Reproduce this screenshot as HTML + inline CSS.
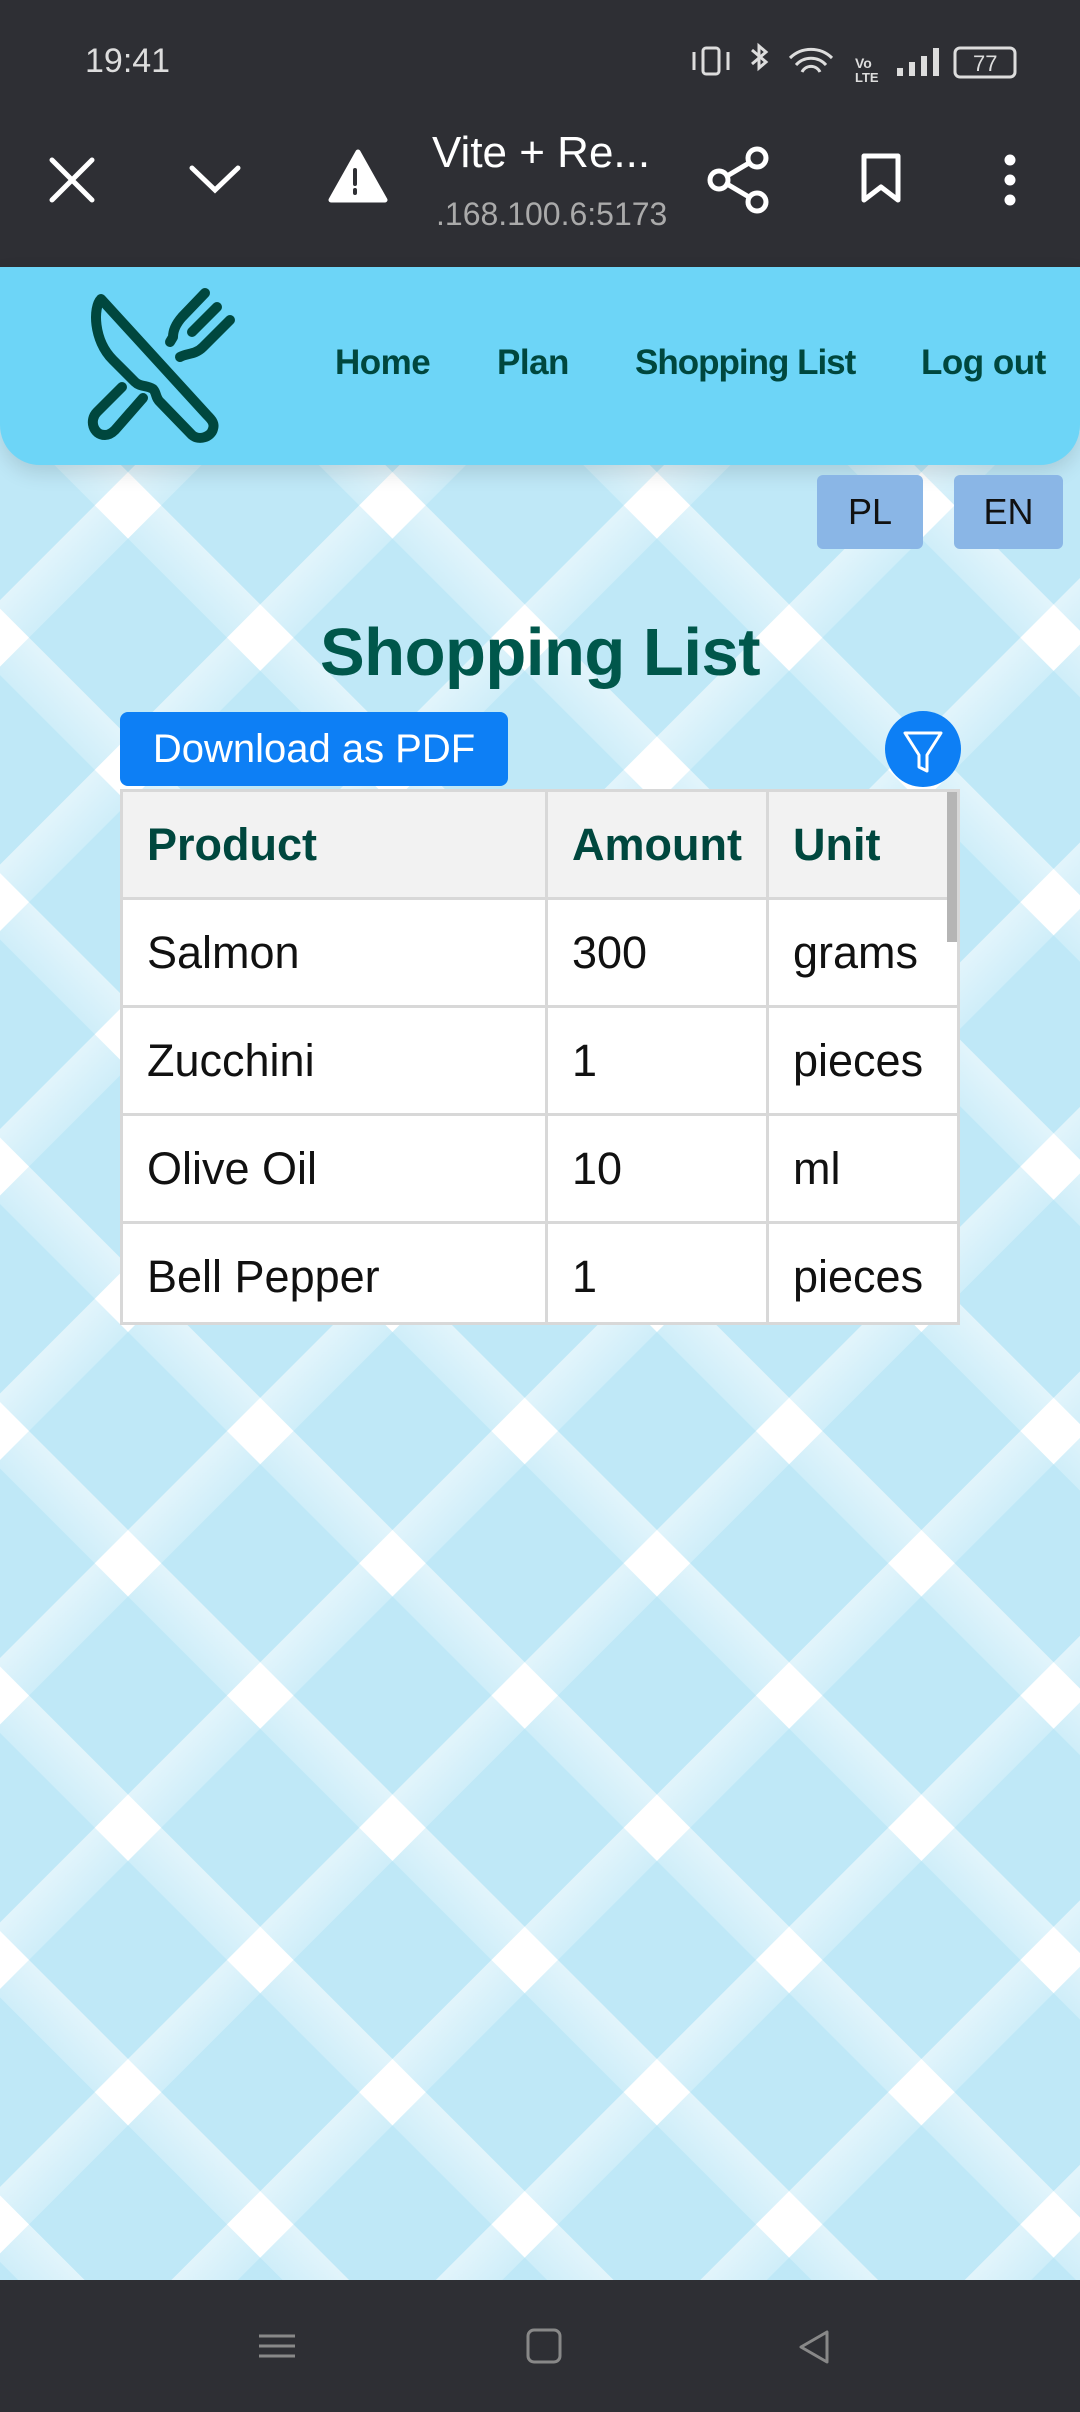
<!DOCTYPE html>
<html><head><meta charset="utf-8"><style>
*{margin:0;padding:0;box-sizing:border-box}
body{width:1080px;height:2412px;overflow:hidden;font-family:"Liberation Sans",sans-serif;position:relative;background:#c4e9f7}
.abs{position:absolute}
.top{left:0;top:0;width:1080px;height:280px;background:#2e2f34}
.bot{left:0;top:2280px;width:1080px;height:132px;background:#2e2f34}
.hdr{left:0;top:267px;width:1080px;height:198px;background:#6dd5f7;border-radius:0 0 40px 40px;box-shadow:0 8px 20px rgba(0,0,0,.12)}
.nav{top:343px;font-size:35px;font-weight:bold;color:#00473e;letter-spacing:-0.5px}
.lang{top:475px;height:74px;background:#8ab6e6;border-radius:6px;color:#111;font-size:36px;text-align:center;line-height:74px}
table{border-collapse:collapse;font-size:45px}
td,th{border:3px solid #d8d8d8;height:108px;padding:0 24px;text-align:left}
th{background:#f2f2f2;color:#00473e}
td{background:#fff;color:#111}
</style></head><body>
<svg class="abs" style="left:0;top:0" width="1080" height="2412">
<defs>
<linearGradient id="g1" x1="0" x2="1" y1="0" y2="0"><stop offset="0" stop-color="#fff" stop-opacity=".55"/><stop offset="1" stop-color="#fff" stop-opacity=".25"/></linearGradient>
<linearGradient id="g2" x1="0" x2="0" y1="0" y2="1"><stop offset="0" stop-color="#fff" stop-opacity=".55"/><stop offset="1" stop-color="#fff" stop-opacity=".25"/></linearGradient>
<pattern id="p" width="187" height="187" patternUnits="userSpaceOnUse" patternTransform="translate(128,1530) rotate(45)">
<rect width="187" height="187" fill="#bfe8f7"/>
<rect x="0" y="0" width="47" height="187" fill="url(#g1)"/>
<rect x="0" y="0" width="187" height="47" fill="url(#g2)"/>
<rect x="0" y="0" width="47" height="47" fill="#fff"/>
</pattern></defs>
<rect width="1080" height="2412" fill="url(#p)"/>
</svg>
<div class="abs top"></div>
<div class="abs" style="left:85px;top:42px;color:#ddd;font-size:34px">19:41</div>
<svg class="abs" style="left:690px;top:40px" width="330" height="45" fill="none" stroke="#ddd" stroke-width="3">
<rect x="13" y="8" width="16" height="26" rx="3"/><path d="M4 12v18M38 12v18"/>
<path d="M62 10l14 12-7 6V6l7 6-14 12"/>
<path d="M100 18a30 30 0 0 1 42 0M106 25a20 20 0 0 1 30 0M112 32a10 10 0 0 1 18 0"/>
<text x="165" y="28" fill="#ddd" stroke="none" font-size="14" font-weight="bold">Vo</text><text x="165" y="42" fill="#ddd" stroke="none" font-size="13" font-weight="bold">LTE</text>
<path d="M210 36v-8M222 36v-14M234 36v-20M246 36v-28" stroke-width="6"/>
<rect x="265" y="8" width="60" height="29" rx="5"/>
<text x="283" y="31" fill="#ddd" stroke="none" font-size="22">77</text>
</svg>
<svg class="abs" style="left:0;top:140px" width="1080" height="80" fill="none" stroke="#fff" stroke-width="5" stroke-linecap="round">
<path d="M52 20l40 40M92 20L52 60"/>
<path d="M192 28l23 22 23-22"/>
<path d="M358 12l27 48h-54z" fill="#fff" stroke-linejoin="round"/>
<path d="M355 30v14M355 50v3" stroke="#2e2f34" stroke-width="4"/>
<circle cx="719" cy="40" r="9"/><circle cx="757" cy="18" r="9"/><circle cx="757" cy="62" r="9"/><path d="M727 36l22-13M727 44l22 13"/>
<path d="M864 16h34v44l-17-13-17 13z" stroke-linejoin="round"/>
<circle cx="1010" cy="20" r="3" fill="#fff"/><circle cx="1010" cy="40" r="3" fill="#fff"/><circle cx="1010" cy="60" r="3" fill="#fff"/>
</svg>
<div class="abs" style="left:432px;top:128px;color:#fff;font-size:44px">Vite + Re...</div>
<div class="abs" style="left:436px;top:196px;color:#aaa;font-size:32px">.168.100.6:5173</div>
<div class="abs hdr"></div>
<svg class="abs" style="left:85px;top:285px" width="160" height="160" fill="none" stroke="#00473e" stroke-width="10" stroke-linecap="round" stroke-linejoin="round">
<path d="M16 14C8 22 8 55 28 75L50 97C55 102 62 100 68 104C72 108 70 113 76 118L107 150C114 156 126 152 128 144C130 138 126 134 122 130Z"/>
<path d="M37 102L12 127C4 135 8 150 20 150C24 150 27 148 30 145L58 113"/>
<path d="M120 8L97 32C90 40 88 46 88 52L85 57"/>
<path d="M132 22L107 47"/>
<path d="M145 35L118 62C110 70 102 68 95 72"/>
</svg>
<div class="abs nav" style="left:335px">Home</div>
<div class="abs nav" style="left:497px">Plan</div>
<div class="abs nav" style="left:635px;letter-spacing:-1px">Shopping List</div>
<div class="abs nav" style="left:921px">Log out</div>
<div class="abs lang" style="left:817px;width:106px">PL</div>
<div class="abs lang" style="left:954px;width:109px">EN</div>
<div class="abs" style="left:0;width:1080px;top:614px;text-align:center;font-size:67px;font-weight:bold;color:#00574b;letter-spacing:-0.5px">Shopping List</div>
<div class="abs" style="left:120px;top:712px;width:388px;height:74px;background:#0d7ff5;border-radius:8px;color:#fff;font-size:40px;line-height:74px;text-align:center">Download as PDF</div>
<div class="abs" style="left:885px;top:711px;width:76px;height:76px;border-radius:50%;background:#0d7ff5"></div>
<svg class="abs" style="left:885px;top:711px" width="76" height="76" fill="none" stroke="#fff" stroke-width="3" stroke-linejoin="round"><path d="M20 22h36L42 44v16l-8-4V44z"/></svg>
<div class="abs" style="left:120px;top:789px;width:840px;height:536px;overflow:hidden;border:3px solid #d8d8d8">
<table style="width:840px;margin:-3px 0 0 -3px">
<tr><th style="width:425px">Product</th><th style="width:221px">Amount</th><th>Unit</th></tr>
<tr><td>Salmon</td><td>300</td><td>grams</td></tr>
<tr><td>Zucchini</td><td>1</td><td>pieces</td></tr>
<tr><td>Olive Oil</td><td>10</td><td>ml</td></tr>
<tr><td>Bell Pepper</td><td>1</td><td>pieces</td></tr>
</table>
<div class="abs" style="right:0;top:0;width:10px;height:150px;background:#b5b5b5"></div>
</div>
<div class="abs bot"></div>
<svg class="abs" style="left:0;top:2310px" width="1080" height="80" fill="none" stroke="#888" stroke-width="3">
<path d="M259 26h36M259 36h36M259 46h36"/>
<rect x="528" y="20" width="32" height="32" rx="6"/>
<path d="M827 22v30l-26-15z" stroke-linejoin="round"/>
</svg>
</body></html>
